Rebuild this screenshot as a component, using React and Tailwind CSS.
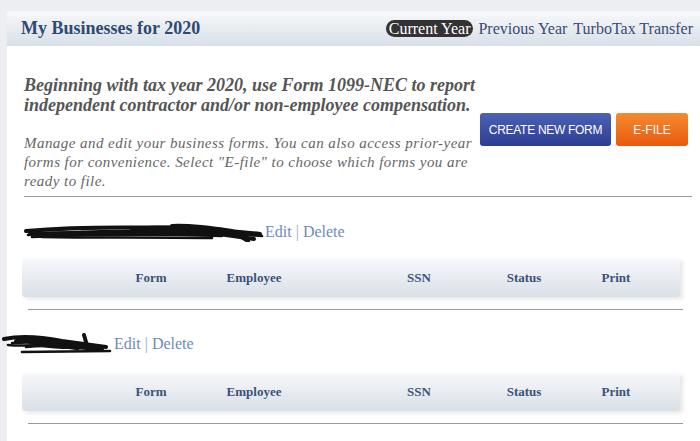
import React from 'react';

const serif = { fontFamily: '"Liberation Serif", "Times New Roman", serif' };

// Black marker scribble over a redacted business name
const Scribble = ({width, height, paths}) => (
    <svg width={width} height={height} viewBox={`0 0 ${width} ${height}`} className="block">
        {paths.map((d, i) => (
            <path key={i} d={d} fill="none" stroke="#111" strokeWidth={i % 2 ? 2.6 : 4}
                  strokeLinecap="round" strokeLinejoin="round"/>
        ))}
    </svg>
);

const scribbleOne = [
    'M4 9 C40 6 90 5 140 6 C180 7 210 9 238 12',
    'M6 13 C60 9 120 8 170 10 C200 11 225 13 240 14',
    'M8 11 C70 14 130 6 190 11 L232 17',
    'M10 15 C80 12 140 12 200 14',
    'M150 4 C170 3 190 6 210 9 L226 19',
    'M30 8 C90 5 150 3 200 7',
    'M14 12 C70 10 120 13 180 11',
    'M60 10 C100 14 150 9 215 13',
    'M110 7 C140 5 170 5 196 8',
    'M20 15 C70 16 130 15 190 16',
];

const scribbleTwo = [
    'M2 6 C20 2 40 4 60 8 C75 10 90 12 104 14',
    'M10 10 C30 8 55 10 80 12',
    'M20 5 C30 12 50 14 70 14 L100 16',
    'M20 19 L108 18',
    'M82 2 L86 16',
    'M6 12 C25 14 50 10 78 14',
    'M14 8 C35 6 55 8 72 11',
    'M24 14 C40 12 60 13 76 16',
];

const TableHeader = () => (
    <div
        className="ml-[15px] w-[658px] h-[38px] rounded-[3px] bg-gradient-to-b from-[#f7f8fa] to-[#d9e0e8] shadow-[3px_2px_4px_rgba(0,0,0,0.10)] grid grid-cols-[88px_82px_124px_54px_98px_112px_72px] items-center text-[13px] font-bold text-[#3b5379]"
        style={serif}>
        <div/>
        <div className="text-center">Form</div>
        <div className="text-center">Employee</div>
        <div/>
        <div className="text-center">SSN</div>
        <div className="text-center">Status</div>
        <div className="text-center">Print</div>
    </div>
);

const EditDelete = () => (
    <span className="text-[16px] text-[#6d8bbd]" style={serif}>
        Edit <span className="text-[#9aa9c4]">|</span> Delete
    </span>
);

export default function App() {
    return (
        <div className="w-[700px] h-[441px] bg-[#eceef1] pl-[7px] pt-[11px] overflow-hidden">
            <div className="bg-white h-full rounded-tl-[3px]">
                <div
                    className="h-[35px] flex items-center justify-between pl-[14px] pr-[7px] bg-gradient-to-b from-[#f8f9fb] to-[#d8dfe7] rounded-tl-[3px]"
                    style={serif}>
                    <h1 className="text-[18px] font-bold text-[#2e4a74]">My Businesses for 2020</h1>
                    <div className="flex items-center text-[16px] text-[#3a4a78]">
                        <span className="bg-[#333] text-white rounded-full px-[3px] leading-[17px]">Current Year</span>
                        <span className="ml-[5px]">Previous Year</span>
                        <span className="ml-[6px]">TurboTax Transfer</span>
                    </div>
                </div>

                <div className="pl-[17px] pr-[8px]">
                    <div className="flex pt-[29px] pb-[5px] border-b border-[#999]">
                        <div className="w-[456px]" style={serif}>
                            <p className="text-[18px] leading-[20px] font-bold italic text-[#555] whitespace-nowrap">
                                Beginning with tax year 2020, use Form 1099-NEC to report<br/>
                                independent contractor and/or non-employee compensation.
                            </p>
                            <p className="mt-[19px] text-[15px] leading-[19px] italic tracking-[0.45px] text-[#666]">
                                Manage and edit your business forms. You can also access prior-year forms for
                                convenience. Select "E-file" to choose which forms you are ready to file.
                            </p>
                        </div>
                        <div className="flex items-start gap-[5px] pt-[38px]"
                             style={{fontFamily: '"Liberation Sans", Arial, sans-serif'}}>
                            <button
                                className="w-[131px] h-[33px] rounded-[3px] bg-gradient-to-b from-[#4d62b4] to-[#2d3d93] text-white text-[12px] tracking-[-0.3px]">
                                CREATE NEW FORM
                            </button>
                            <button
                                className="w-[72px] h-[33px] rounded-[3px] bg-gradient-to-b from-[#f58a2e] to-[#e8590c] text-white text-[12px]">
                                E-FILE
                            </button>
                        </div>
                    </div>
                </div>

                <div className="pt-[23px] pl-[15px] flex items-center gap-[1px]">
                    <Scribble width={242} height={20} paths={scribbleOne}/>
                    <EditDelete/>
                </div>
                <div className="mt-[15px]">
                    <TableHeader/>
                </div>
                <div className="ml-[21px] mr-[17px] mt-[12px] border-b border-[#999]"/>

                <div className="pt-[22px] -ml-[5px] flex items-center">
                    <Scribble width={112} height={22} paths={scribbleTwo}/>
                    <EditDelete/>
                </div>
                <div className="mt-[17px]">
                    <TableHeader/>
                </div>
                <div className="ml-[21px] mr-[17px] mt-[12px] border-b border-[#999]"/>
            </div>
        </div>
    );
}
